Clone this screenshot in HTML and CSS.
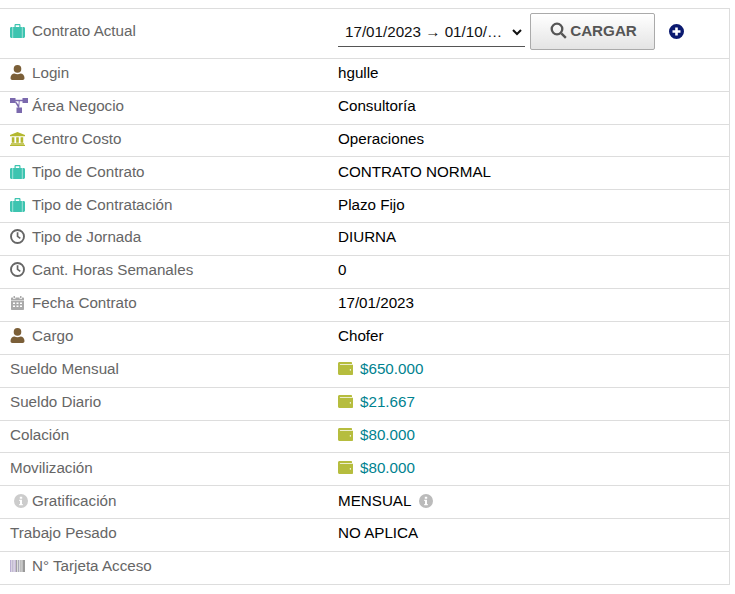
FILE: index.html
```html
<!DOCTYPE html>
<html lang="es">
<head>
  <meta charset="UTF-8">
  <meta name="viewport" content="width=device-width, initial-scale=1.0">
  <title>Contrato</title>
  <link rel="stylesheet" href="styles.css">
</head>
<body>
  <svg class="defs" width="0" height="0">
    <symbol id="i-case" viewBox="0 0 15 14">
      <path d="M4.500 3V1.200C4.500.5 5 0 5.700 0h3.600c.7 0 1.200.5 1.200 1.200V3H9.300V1.300H5.700V3z"/>
      <path d="M3.100 3h8.800v11H3.100zM2.600 3v11H1.400C.6 14 0 13.400 0 12.600V4.400C0 3.600.6 3 1.400 3zM12.400 3h1.200c.8 0 1.400.6 1.400 1.400v8.200c0 .8-.6 1.400-1.400 1.400h-1.200z"/>
    </symbol>
    <symbol id="i-user" viewBox="0 0 14 15">
      <circle cx="7" cy="3.900" r="3.800"/>
      <path d="M0 13C0 10.200 1.800 8.400 4 8.400c.9.500 1.900.8 3 .8s2.100-.3 3-.8c2.200 0 4 1.800 4 4.600 0 1.200-.7 2-1.800 2H1.800C.7 15 0 14.200 0 13z"/>
    </symbol>
    <symbol id="i-map" viewBox="0 0 18 15">
      <path d="M0 0h5.500v5H0zM12.500 0H18v5h-5.500zM6.500 9.500h5.500V15H6.500z"/>
      <path d="M5 1.800h8v1.400H9.700l-.5 6.500H8.200L5 4.200l.9-.8 2.600 3.400.2-3.600H5z"/>
    </symbol>
    <symbol id="i-bank" viewBox="0 0 15 14">
      <path d="M7.500 0L15 3v1.300H0V3zM1.800 5.200h2.600v5.600H1.800zM6.200 5.200h2.600v5.600H6.200zM10.600 5.200h2.600v5.600h-2.600zM1 11.200h13v1.200H1zM0 12.700h15V14H0z"/>
    </symbol>
    <symbol id="i-clock" viewBox="0 0 15 15">
      <circle cx="7.500" cy="7.500" r="6.500" fill="none" stroke="currentColor" stroke-width="1.900"/>
      <path d="M6.700 3.200h1.700v3.900l2.400 1.700-1 1.300-3.100-2.300z"/>
    </symbol>
    <symbol id="i-cal" viewBox="0 0 13 14">
      <path d="M2.500 0h1.500v2H2.500zM9 0h1.500v2H9zM1 1.500h1v1.200h2.500V1.500h4v1.200H11V1.500h1c.6 0 1 .4 1 1V4.500H0v-2c0-.6.4-1 1-1z"/>
      <path fill-rule="evenodd" d="M0 5h13v8c0 .6-.4 1-1 1H1c-.6 0-1-.4-1-1zM2 6.500v1.500h2V6.500zM5.500 6.500v1.500h2V6.500zM9 6.500v1.500h2V6.500zM2 9.500V11h2V9.500zM5.500 9.500V11h2V9.500zM9 9.500V11h2V9.500z"/>
    </symbol>
    <symbol id="i-wallet" viewBox="0 0 15 13">
      <path fill-rule="evenodd" d="M1.500 0h11.500c.6 0 1 .4 1 1v1H2.200c-.5 0-.5.700 0 .7H15V12c0 .6-.4 1-1 1H1.500C.7 13 0 12.300 0 11.500v-10C0 .7.700 0 1.500 0zM11.800 7.200v1.200H13V7.200z"/>
    </symbol>
    <symbol id="i-info" viewBox="0 0 14 14">
      <path fill-rule="evenodd" d="M7 0a7 7 0 1 1 0 14A7 7 0 0 1 7 0zM5.800 2.800v2h2.400v-2zM5.200 5.800v1.200h.8v3H5.200v1.200h3.600V10H8V5.800z"/>
    </symbol>
    <symbol id="i-plus" viewBox="0 0 15 15">
      <path fill-rule="evenodd" d="M7.500 0a7.500 7.500 0 1 1 0 15 7.500 7.500 0 0 1 0-15zM6.200 3.500v2.700H3.500v2.600h2.700v2.700h2.600V8.800h2.700V6.200H8.800V3.500z"/>
    </symbol>
    <symbol id="i-search" viewBox="0 0 17 17">
      <circle cx="7" cy="7" r="5.300" fill="none" stroke="currentColor" stroke-width="2.300"/>
      <path d="M10.500 12.200l1.700-1.700 4.500 4.500-1.700 1.700z"/>
    </symbol>
  </svg>

  <table class="ficha">
    <tr class="fila-alta">
      <td class="etq"><svg class="ico case"><use href="#i-case"/></svg>Contrato Actual</td>
      <td>
        <div class="carga">
          <select class="periodo">
            <option>17/01/2023 → 01/10/2023 (vigente)</option>
          </select>
          <button class="btn-cargar"><svg class="lupa"><use href="#i-search"/></svg>CARGAR</button>
          <svg class="mas"><use href="#i-plus"/></svg>
        </div>
      </td>
    </tr>
    <tr>
      <td class="etq"><svg class="ico user"><use href="#i-user"/></svg>Login</td>
      <td>hgulle</td>
    </tr>
    <tr>
      <td class="etq"><svg class="ico map"><use href="#i-map"/></svg>Área Negocio</td>
      <td>Consultoría</td>
    </tr>
    <tr>
      <td class="etq"><svg class="ico bank"><use href="#i-bank"/></svg>Centro Costo</td>
      <td>Operaciones</td>
    </tr>
    <tr>
      <td class="etq"><svg class="ico case"><use href="#i-case"/></svg>Tipo de Contrato</td>
      <td>CONTRATO NORMAL</td>
    </tr>
    <tr>
      <td class="etq"><svg class="ico case"><use href="#i-case"/></svg>Tipo de Contratación</td>
      <td>Plazo Fijo</td>
    </tr>
    <tr>
      <td class="etq"><svg class="ico clock"><use href="#i-clock"/></svg>Tipo de Jornada</td>
      <td>DIURNA</td>
    </tr>
    <tr>
      <td class="etq"><svg class="ico clock"><use href="#i-clock"/></svg>Cant. Horas Semanales</td>
      <td>0</td>
    </tr>
    <tr>
      <td class="etq"><svg class="ico cal"><use href="#i-cal"/></svg>Fecha Contrato</td>
      <td>17/01/2023</td>
    </tr>
    <tr>
      <td class="etq"><svg class="ico user"><use href="#i-user"/></svg>Cargo</td>
      <td>Chofer</td>
    </tr>
    <tr>
      <td class="etq">Sueldo Mensual</td>
      <td class="monto"><svg class="ico wallet"><use href="#i-wallet"/></svg>$650.000</td>
    </tr>
    <tr>
      <td class="etq">Sueldo Diario</td>
      <td class="monto"><svg class="ico wallet"><use href="#i-wallet"/></svg>$21.667</td>
    </tr>
    <tr>
      <td class="etq">Colación</td>
      <td class="monto"><svg class="ico wallet"><use href="#i-wallet"/></svg>$80.000</td>
    </tr>
    <tr>
      <td class="etq">Movilización</td>
      <td class="monto"><svg class="ico wallet"><use href="#i-wallet"/></svg>$80.000</td>
    </tr>
    <tr>
      <td class="etq"><svg class="ico info"><use href="#i-info"/></svg>Gratificación</td>
      <td>MENSUAL<svg class="info-der"><use href="#i-info"/></svg></td>
    </tr>
    <tr>
      <td class="etq">Trabajo Pesado</td>
      <td>NO APLICA</td>
    </tr>
    <tr>
      <td class="etq"><svg class="ico barras" viewBox="0 0 15 12"><rect x="0" width="1.500" height="12" fill="#b9aed2"/><rect x="1.500" width="1" height="12" fill="#d5d0e0"/><rect x="2.500" width="1" height="12" fill="#9c92b4"/><rect x="3.500" width="1" height="12" fill="#d8d0e4"/><rect x="4.500" width="1.500" height="12" fill="#c5b9d6"/><rect x="6" width="1" height="12" fill="#a0a0a0"/><rect x="7" width="1" height="12" fill="#ddd"/><rect x="8" width="1.500" height="12" fill="#a9a9b8"/><rect x="9.500" width="1" height="12" fill="#ddd"/><rect x="10.500" width="1" height="12" fill="#8c8c8c"/><rect x="11.500" width="1" height="12" fill="#ccc"/><rect x="12.500" width="2.500" height="12" fill="#999"/></svg>N° Tarjeta Acceso</td>
      <td></td>
    </tr>
  </table>
</body>
</html>
```

FILE: styles.css
```css
body {
  font-family: "Liberation Sans", Arial, sans-serif;
  font-size: 15.2px;
  margin: 8px 0 0;
  color: #000;
  background-color: #fff;
}
.defs {
  position: absolute;
}
.ficha {
  width: 730px;
  border-collapse: collapse;
  border-top: 1px solid #ddd;
  border-right: 1px solid #ddd;
  table-layout: fixed;
}
.ficha tr {
  height: 32.9px;
  border-bottom: 1px solid #ddd;
}
.ficha tr.fila-alta {
  height: 49.8px;
}
.ficha td {
  padding: 0 0 4.6px 10px;
  vertical-align: middle;
}
.ficha .fila-alta td {
  padding-bottom: 5.6px;
}
.ficha td.etq {
  width: 318px;
  color: #666;
}
.ico {
  width: 15px;
  height: 15px;
  margin-right: 7px;
  vertical-align: -2px;
  fill: currentColor;
}
.case { color: #3dc4b0; height: 14px; }
.user { color: #7b5f38; }
.map { color: #7b69ad; width: 18px; margin-right: 4px; }
.bank { color: #b4b82f; height: 14px; }
.clock { color: #666; }
.cal { color: #aaa; height: 14px; }
.info { color: #ccc; margin-left: 4px; margin-right: 4px; width: 14px; height: 14px; }
.wallet { color: #b6bd3e; height: 13px; vertical-align: -1px; }
.barras { height: 12px; vertical-align: -1px; }
.monto { color: #00828f; }
.info-der {
  width: 14px;
  height: 14px;
  margin-left: 8px;
  vertical-align: -2px;
  fill: #bbb;
  color: #bbb;
}
.carga {
  display: flex;
  align-items: center;
  padding-top: 1.6px;
}
.periodo {
  width: 187px;
  height: 30px;
  margin-top: 1px;
  padding: 0 3px;
  font-family: inherit;
  font-size: 15.2px;
  color: #111;
  background: #fff;
  border: none;
  border-bottom: 1px solid #555;
  border-radius: 0;
  text-overflow: ellipsis;
}
.btn-cargar {
  display: flex;
  align-items: center;
  justify-content: center;
  width: 125px;
  height: 37px;
  margin-left: 5px;
  padding: 0 0 2px 2px;
  font-family: inherit;
  font-size: 15.2px;
  font-weight: bold;
  color: #555;
  background: linear-gradient(#fff, #e4e4e4);
  border: 1px solid #aaa;
  border-radius: 2px;
}
.lupa {
  width: 17px;
  height: 17px;
  margin-right: 3px;
  fill: currentColor;
}
.mas {
  width: 15px;
  height: 15px;
  margin-left: 14px;
  margin-top: 1px;
  fill: #0b1a70;
}
```
